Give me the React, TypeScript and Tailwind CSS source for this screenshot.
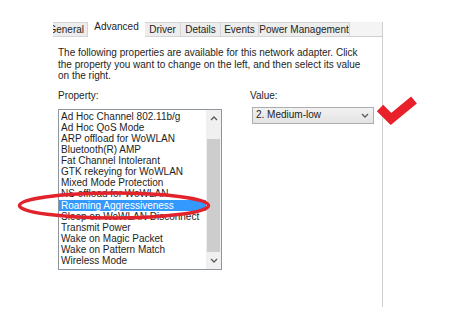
import React from "react";

const items = [
  "Ad Hoc Channel 802.11b/g",
  "Ad Hoc QoS Mode",
  "ARP offload for WoWLAN",
  "Bluetooth(R) AMP",
  "Fat Channel Intolerant",
  "GTK rekeying for WoWLAN",
  "Mixed Mode Protection",
  "NS offload for WoWLAN",
  "Roaming Aggressiveness",
  "Sleep on WoWLAN Disconnect",
  "Transmit Power",
  "Wake on Magic Packet",
  "Wake on Pattern Match",
  "Wireless Mode",
];

function Chevron({ up = false }: { up?: boolean }) {
  return (
    <svg width="8" height="5" viewBox="0 0 8 5" className="block">
      <polyline
        points={up ? "1,4 4,1 7,4" : "1,1 4,4 7,1"}
        fill="none"
        stroke="#5a5a5a"
        strokeWidth="1.3"
      />
    </svg>
  );
}

type Tab = { label: string; w: string; selected?: boolean; clip?: boolean };

const tabs: Tab[] = [
  { label: "General", w: "w-[35px]", clip: true },
  { label: "Advanced", w: "w-[57px]", selected: true },
  { label: "Driver", w: "w-[36px]" },
  { label: "Details", w: "w-[40px]" },
  { label: "Events", w: "w-[38px]" },
  { label: "Power Management", w: "w-[91px]" },
];

export default function App() {
  return (
    <div className="relative h-[314px] w-[474px] overflow-hidden bg-white font-['Liberation_Sans',Arial,sans-serif] text-[10px] text-[#1e1e1e]">
      <div className="ml-[53px] mt-[20px] w-[330px]">
        <div className="flex h-[17px] items-end">
          {tabs.map((t) => (
            <div
              key={t.label}
              className={`flex shrink-0 items-center overflow-hidden whitespace-nowrap leading-none ${t.w} ${
                t.selected
                  ? "h-[17px] justify-center bg-white pb-[4px]"
                  : `h-[15px] border-t border-r border-b border-[#d5d5d5] bg-[#ededed] ${
                      t.clip ? "justify-end pr-[3px]" : "justify-center"
                    }`
              }`}
            >
              {t.label}
            </div>
          ))}
          <div className="h-[15px] flex-1 border-b border-r border-[#cfcfcf] bg-[#f4f4f4]" />
        </div>
        <div className="h-[270px] border-r border-[#cfcfcf] pl-[5px] pt-[10px]">
          <p className="whitespace-nowrap leading-[11.5px]">
            The following properties are available for this network adapter. Click
            <br />
            the property you want to change on the left, and then select its value
            <br />
            on the right.
          </p>
          <div className="mt-[8px] flex">
            <div className="w-[164px]">
              <div className="h-[12px] leading-[12px]">Property:</div>
              <div className="mt-[7px] flex h-[161px] border border-[#8f959d]">
                <div className="flex-1 overflow-hidden pt-[1px]">
                  {items.map((it) => (
                    <div
                      key={it}
                      className={`h-[11.15px] whitespace-nowrap pl-[2px] leading-[11.15px] ${
                        it === "Roaming Aggressiveness" ? "bg-[#3399ff] text-white" : ""
                      }`}
                    >
                      {it}
                    </div>
                  ))}
                </div>
                <div className="flex w-[15px] flex-col bg-[#f0f0f0]">
                  <div className="flex h-[17px] items-center justify-center">
                    <Chevron up />
                  </div>
                  <div className="flex-1 px-[1px]">
                    <div className="mt-[12px] h-[113px] bg-[#cdcdcd]" />
                  </div>
                  <div className="flex h-[17px] items-center justify-center">
                    <Chevron />
                  </div>
                </div>
              </div>
            </div>
            <div className="ml-[28px]">
              <div className="h-[12px] leading-[12px]">Value:</div>
              <div className="ml-[2px] mt-[5px] flex h-[17px] w-[122px] items-center justify-between border border-[#adadad] bg-gradient-to-b from-[#f2f2f2] to-[#e3e3e3] pl-[3px] pr-[4px]">
                <span className="leading-none">2. Medium-low</span>
                <Chevron />
              </div>
            </div>
          </div>
        </div>
      </div>

      <svg
        className="absolute left-[16px] top-[190px]"
        width="196"
        height="32"
        viewBox="0 0 196 32"
      >
        <ellipse cx="98" cy="15.5" rx="94.5" ry="12.5" fill="none" stroke="#e2232b" strokeWidth="3.5" />
      </svg>

      <svg className="absolute left-[370px] top-[92px]" width="52" height="38" viewBox="0 0 52 38">
        <polyline
          points="10,16 21,27 44,8"
          fill="none"
          stroke="#e8202a"
          strokeWidth="9"
          strokeLinejoin="miter"
          strokeLinecap="butt"
        />
      </svg>
    </div>
  );
}
